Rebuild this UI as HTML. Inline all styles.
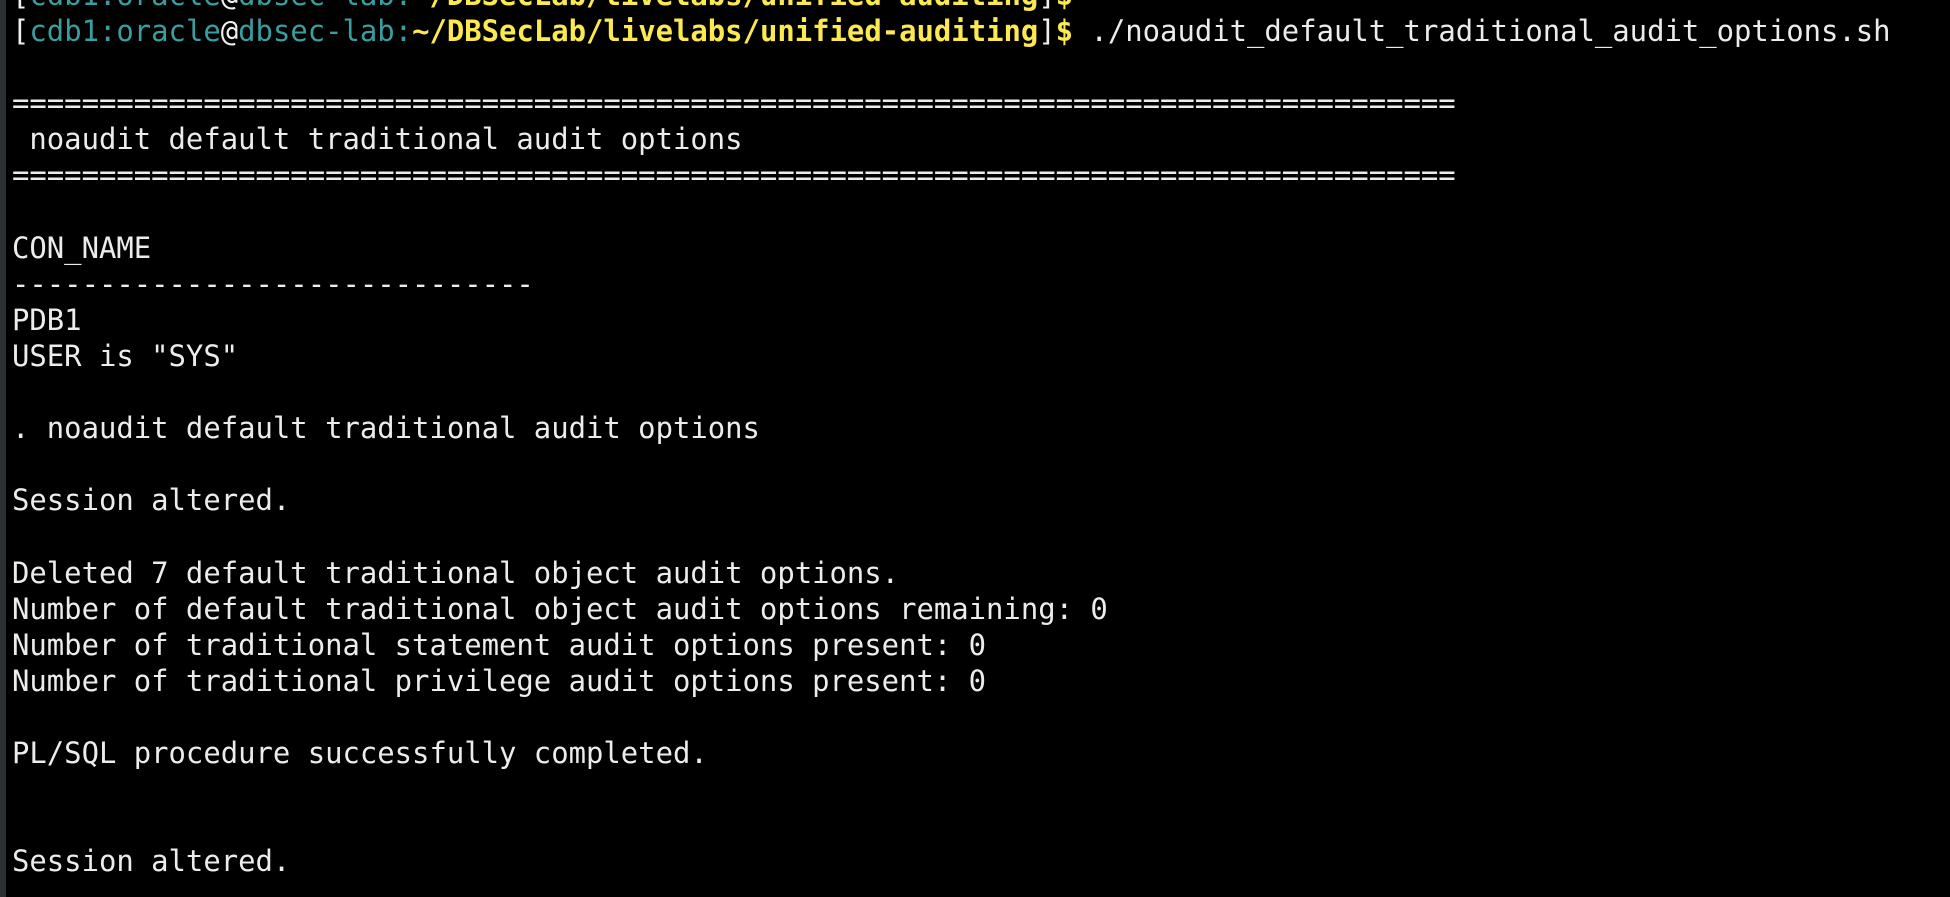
<!DOCTYPE html>
<html><head><style>
html,body{margin:0;padding:0;background:#000;width:1950px;height:897px;overflow:hidden}
.bar{position:absolute;left:0;top:0;width:6px;height:897px;background:#2b3034}
pre{position:absolute;left:12px;top:-23px;margin:0;font-family:"DejaVu Sans Mono","Liberation Mono",monospace;font-size:28.9px;line-height:36.1px;color:#ececec;letter-spacing:0}
.t{color:#3a9ea0}.y{color:#fce94f;font-weight:bold}.w{color:#f0f0f0}
</style></head><body><div class="bar"></div>
<pre><span class="w">[</span><span class="t">cdb1:oracle</span><span class="w">@</span><span class="t">dbsec-lab:</span><span class="y">~/DBSecLab/livelabs/unified-auditing</span><span class="w">]</span><span class="y">$</span>
<span class="w">[</span><span class="t">cdb1:oracle</span><span class="w">@</span><span class="t">dbsec-lab:</span><span class="y">~/DBSecLab/livelabs/unified-auditing</span><span class="w">]</span><span class="y">$</span> ./noaudit_default_traditional_audit_options.sh

===================================================================================
 noaudit default traditional audit options
===================================================================================

CON_NAME
------------------------------
PDB1
USER is "SYS"

. noaudit default traditional audit options

Session altered.

Deleted 7 default traditional object audit options.
Number of default traditional object audit options remaining: 0
Number of traditional statement audit options present: 0
Number of traditional privilege audit options present: 0

PL/SQL procedure successfully completed.


Session altered.
</pre></body></html>
